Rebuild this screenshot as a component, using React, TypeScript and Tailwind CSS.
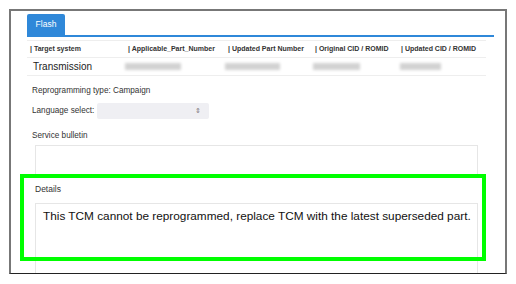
const cols = [
  { label: '| Target system', w: 'w-[98px]' },
  { label: '| Applicable_Part_Number', w: 'w-[100px]' },
  { label: '| Updated Part Number', w: 'w-[87px]' },
  { label: '| Original CID / ROMID', w: 'w-[86px]' },
  { label: '| Updated CID / ROMID', w: 'w-[88px]' },
];

function Blur({ w }: { w: string }) {
  return <div className={`h-[7px] ${w} bg-[#d2d2d2] blur-[1.5px]`} />;
}

export default function App() {
  return (
    <div className="relative h-[284px] w-[516px] bg-white font-['Liberation_Sans',Arial,sans-serif] text-[#333]">
      <div className="absolute left-[9px] top-[9px] h-[265px] w-[498px] overflow-hidden border-2 border-b border-[#777] border-b-[#222] bg-white">
        <div className="pl-[16px] pr-[11px] pt-[3px]">
          {/* tabs */}
          <div className="flex border-b-2 border-[#2f88d9]">
            <div className="flex h-[21px] w-[38px] items-center justify-center rounded-t-[2px] bg-[#2f88d9] text-[8.5px] text-white">
              Flash
            </div>
          </div>

          {/* table */}
          <div className="mt-[3px] w-[459px]">
            <div className="flex h-[18px] items-center border-y border-[#eeeeee] text-[7px] font-bold text-[#333]">
              {cols.map((c) => (
                <div key={c.label} className={`${c.w} pl-[3px] whitespace-nowrap`}>
                  {c.label}
                </div>
              ))}
            </div>
            <div className="flex h-[18px] items-center border-b border-[#eeeeee]">
              <div className="w-[98px] pl-[6px] text-[10px] text-[#222]">Transmission</div>
              <div className="w-[100px]"><Blur w="w-[56px]" /></div>
              <div className="w-[87px]"><Blur w="w-[55px]" /></div>
              <div className="w-[86px] pl-[1px]"><Blur w="w-[47px]" /></div>
              <div className="w-[88px] pl-[2px]"><Blur w="w-[41px]" /></div>
            </div>
          </div>

          {/* form */}
          <div className="pl-[5px] text-[8.2px] text-[#333]">
            <div className="mt-[10px] leading-[10px]">Reprogramming type: Campaign</div>
            <div className="mt-[7px] flex items-center">
              <span className="w-[65px]">Language select:</span>
              <div className="flex h-[16px] w-[112px] items-center justify-end rounded-[2px] bg-[#efeff3] pr-[8px] text-[7px] text-[#777]">
                ⇕
              </div>
            </div>
            <div className="mt-[12px] leading-[10px]">Service bulletin</div>
          </div>
          <div className="ml-[8px] mt-[4px] h-[32px] w-[443px] border border-[#e6e6e6]" />

          <div className="ml-[8px] mt-[7px] text-[8.5px] leading-[10px] text-[#333]">Details</div>
          <div className="ml-[8px] mt-[9px] h-[80px] w-[443px] border border-[#e6e6e6] pl-[7px] pt-[4px] text-[11.8px] text-[#111]">
            This TCM cannot be reprogrammed, replace TCM with the latest superseded part.
          </div>
        </div>
      </div>

      {/* annotation highlight */}
      <div className="absolute left-[20px] top-[174px] h-[87px] w-[466px] border-4 border-[#00ff00]" />
    </div>
  );
}
